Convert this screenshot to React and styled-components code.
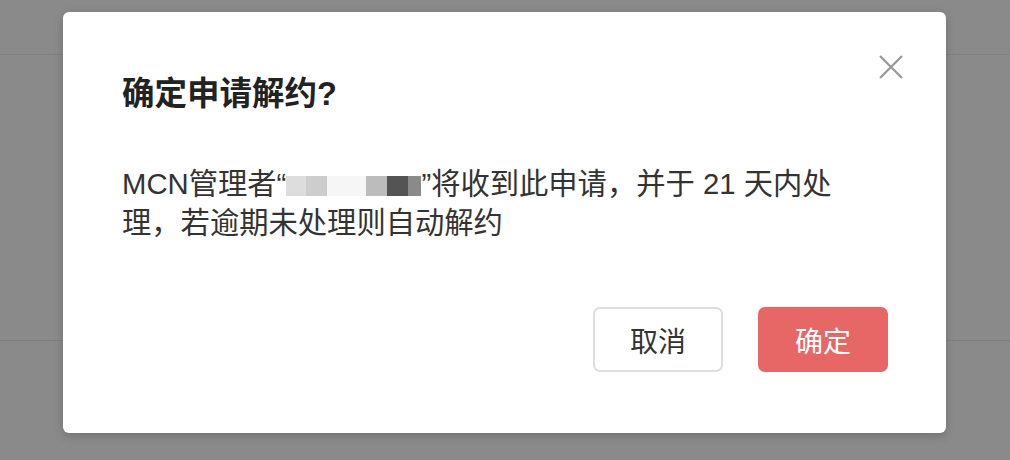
import React from "react";
import styled, { createGlobalStyle } from "styled-components";

const Global = createGlobalStyle`
  html, body { margin: 0; padding: 0; }
  body { font-family: "Liberation Sans", "Noto Sans CJK SC", sans-serif; }
`;

const Screen = styled.div`
  position: relative;
  width: 1010px;
  height: 460px;
  overflow: hidden;
  background: #8a8a8a;
`;

const PageBar = styled.div`
  height: ${(p) => p.$h}px;
  border-bottom: 1px solid #7f7f7f;
`;

const Overlay = styled.div`
  position: absolute;
  inset: 0;
  display: flex;
  justify-content: flex-start;
  align-items: flex-start;
  padding: 12px 0 0 63px;
`;

const Modal = styled.div`
  position: relative;
  box-sizing: border-box;
  width: 883px;
  height: 421px;
  background: #fff;
  border-radius: 6px;
  box-shadow: 0 3px 10px rgba(0, 0, 0, 0.18);
  padding: 62px 58px 61px 59px;
  display: flex;
  flex-direction: column;
  font-family: "Liberation Sans", "Noto Sans CJK SC", sans-serif;
`;

const Close = styled.button`
  position: absolute;
  top: 42px;
  right: 42px;
  width: 26px;
  height: 26px;
  padding: 0;
  border: 0;
  background: transparent;
  display: flex;
  align-items: center;
  justify-content: center;
  cursor: pointer;
`;

const Title = styled.h2`
  margin: 0;
  font-size: 32.5px;
  line-height: 40px;
  font-weight: 700;
  color: #222;
`;

const Body = styled.p`
  margin: 50px 0 0;
  font-size: 29.3px;
  line-height: 39px;
  color: #333;
`;

const Mosaic = styled.span`
  display: inline-flex;
  vertical-align: -2px;
  height: 20px;
  width: 135px;
`;

const Cell = styled.span`
  display: block;
  height: 100%;
  width: ${(p) => p.$w}px;
  background: ${(p) => p.$c};
`;

const Footer = styled.div`
  margin-top: auto;
  display: flex;
  justify-content: flex-end;
  gap: 35px;
`;

const Button = styled.button`
  box-sizing: border-box;
  width: 130px;
  height: 65px;
  border-radius: 7px;
  font-family: "Liberation Sans", "Noto Sans CJK SC", sans-serif;
  font-size: 28px;
  cursor: pointer;
  border: 2px solid ${(p) => (p.$primary ? "#e76767" : "#dedede")};
  background: ${(p) => (p.$primary ? "#e76767" : "#fff")};
  color: ${(p) => (p.$primary ? "#fff" : "#333")};
`;

const cells = [
  { w: 20, c: "#dddddd" },
  { w: 21, c: "#cdcdcd" },
  { w: 39, c: "#f6f6f6" },
  { w: 21, c: "#bcbcbc" },
  { w: 21, c: "#545454" },
  { w: 13, c: "#8a8a8a" },
];

export default function App() {
  return (
    <>
      <Global />
      <Screen>
        <PageBar $h={54} />
        <PageBar $h={285} />
        <Overlay>
          <Modal>
            <Close aria-label="关闭">
              <svg width="26" height="24" viewBox="0 0 26 24">
                <path d="M2 1 L24 23 M24 1 L2 23" stroke="#999" strokeWidth="2.3" fill="none" />
              </svg>
            </Close>
            <Title>确定申请解约?</Title>
            <Body>
              MCN管理者“
              <Mosaic>
                {cells.map((c, i) => (
                  <Cell key={i} $w={c.w} $c={c.c} />
                ))}
              </Mosaic>
              ”将收到此申请，并于 21 天内处
              <br />
              理，若逾期未处理则自动解约
            </Body>
            <Footer>
              <Button>取消</Button>
              <Button $primary>确定</Button>
            </Footer>
          </Modal>
        </Overlay>
      </Screen>
    </>
  );
}
